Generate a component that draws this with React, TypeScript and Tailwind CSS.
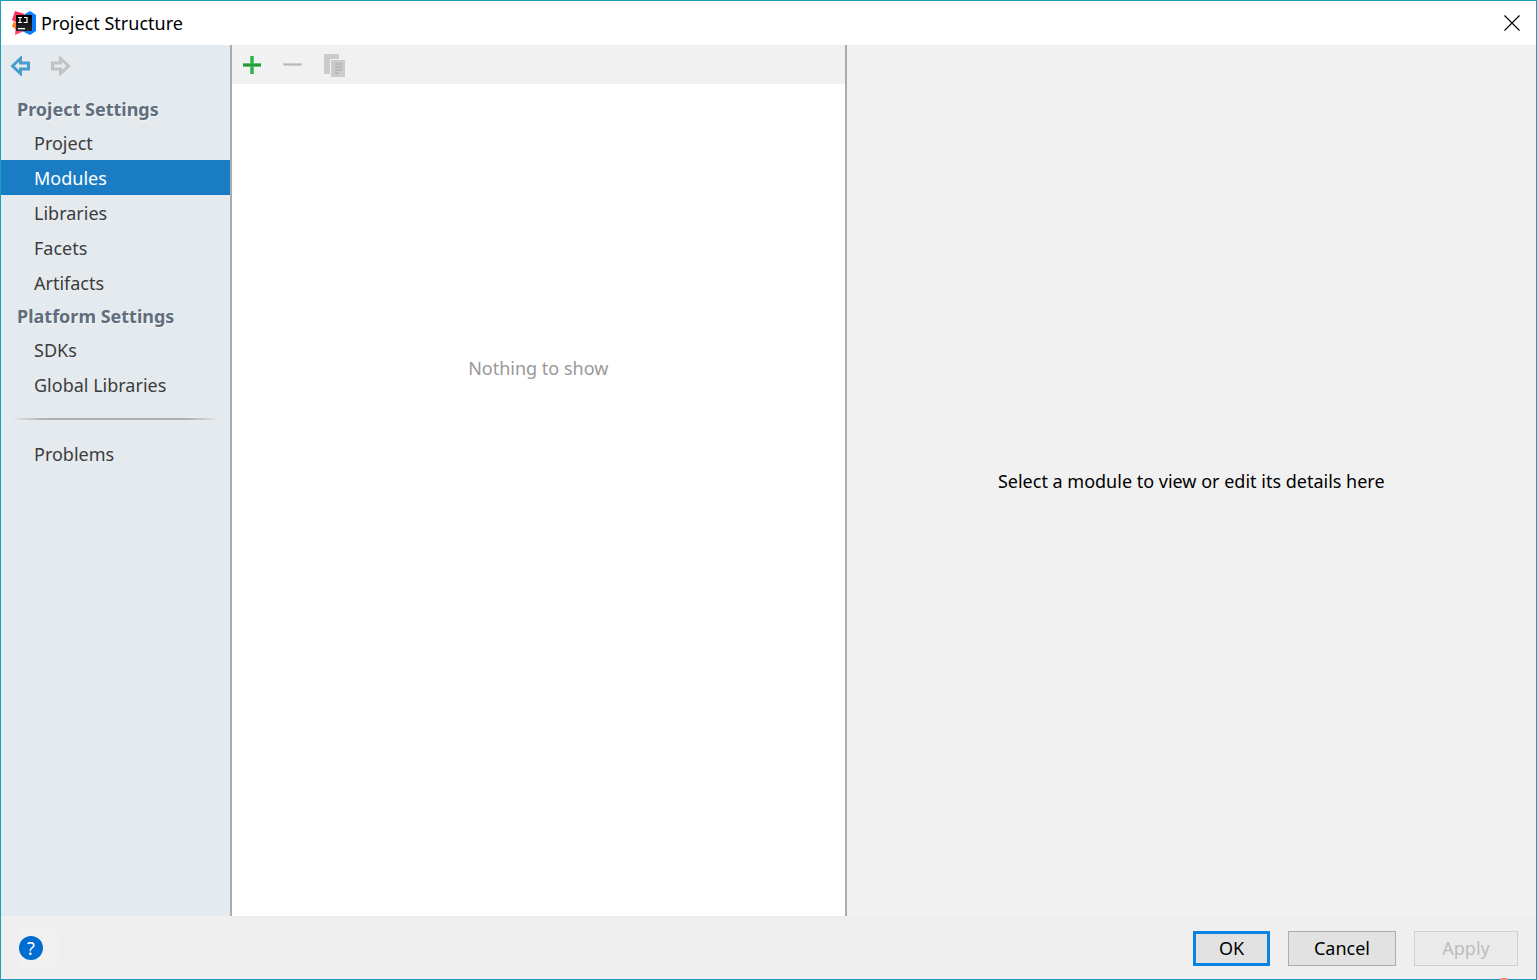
import { useState } from "react";

type Group = { title: string; items: string[] };

const groups: Group[] = [
  {
    title: "Project Settings",
    items: ["Project", "Modules", "Libraries", "Facets", "Artifacts"],
  },
  { title: "Platform Settings", items: ["SDKs", "Global Libraries"] },
];

function AppLogo() {
  return (
    <svg viewBox="0 0 24 24" className="h-6 w-6" aria-hidden="true">
      <defs>
        <linearGradient id="logo-box" x1="0" y1="0" x2="0" y2="1">
          <stop offset="0" stopColor="#000" />
          <stop offset="1" stopColor="#2a2a2a" />
        </linearGradient>
      </defs>
      <path d="M0 15.500 1.500 11 5 12v7L3.500 18z" fill="#fc801d" />
      <path d="M3 0 13 3 8 13 5 12 0 9z" fill="#fe315d" />
      <path d="M4 14 12 20 3 24z" fill="#fe4570" />
      <path d="M13 3 18 0 24 4V20L18 24 10 20z" fill="#087cfa" />
      <path d="M4 4h16v16H4z" fill="url(#logo-box)" />
      <path
        d="M6 6.500h4M8 6.500v5M6 11.500h4M12 6.500h3v5h-3.500"
        fill="none"
        stroke="#fff"
        strokeWidth="1.200"
      />
      <path d="M6 17h7v1.300H6z" fill="#fff" />
    </svg>
  );
}

function Arrow({ color, flip }: { color: string; flip?: boolean }) {
  return (
    <svg
      viewBox="0 0 20 20"
      className={`h-5 w-5 ${flip ? "-scale-x-100" : ""}`}
      aria-hidden="true"
    >
      <path
        d="M2.500 10 10.500 2.500V7H18.500V13H10.500V17.500z"
        fill="none"
        stroke={color}
        strokeWidth="3"
      />
    </svg>
  );
}

function CopyIcon() {
  return (
    <svg viewBox="0 0 22 24" className="h-6 w-[22px]" aria-hidden="true">
      <path d="M0 1h15v5H6v15H0z" fill="#cbcbcb" />
      <path d="M7 7h14v17H7z" fill="#cbcbcb" />
      <path d="M11 10h7v2h-7zM11 13h7v2h-7zM11 16h7v2h-7zM11 19h4v2h-4z" fill="#b9b9b9" />
    </svg>
  );
}

export default function App() {
  const [selected, setSelected] = useState("Modules");

  const row = (name: string) => (
    <button
      key={name}
      onClick={() => setSelected(name)}
      className={`flex h-[35px] w-full items-center pl-[33px] text-left ${
        name === selected ? "bg-[#1a7dc4] text-white" : "text-[#3c3c3c]"
      }`}
    >
      {name}
    </button>
  );

  return (
    <div className="relative flex min-h-screen flex-col border border-[#1a9fbc] bg-[#efefef] font-['Noto_Sans','Open_Sans',sans-serif] text-lg leading-6 text-black">
      <header className="flex h-11 shrink-0 items-center justify-between bg-white pl-[11px] pr-4">
        <div className="flex items-center gap-[5px]">
          <AppLogo />
          <h1>Project Structure</h1>
        </div>
        <button aria-label="Close">
          <svg viewBox="0 0 16 16" className="h-4 w-4" aria-hidden="true">
            <path d="M.5.5l15 15M15.500.5l-15 15" stroke="#000" strokeWidth="1.200" />
          </svg>
        </button>
      </header>

      <main className="flex flex-1">
        {/* sections */}
        <nav className="w-[231px] shrink-0 border-r-2 border-[#acacac] bg-[#e5eaee]">
          <div className="flex h-12 items-center gap-[21px] pb-1.5 pl-[9px]">
            <button aria-label="Back">
              <Arrow color="#4a9ccb" />
            </button>
            <button aria-label="Forward" disabled>
              <Arrow color="#c2c2c2" flip />
            </button>
          </div>
          {groups.map((g) => (
            <div key={g.title}>
              <h2 className="flex h-8 items-center pl-4 font-bold text-[#606e7d] [text-shadow:1px_1px_0_#f4f6f8]">
                {g.title}
              </h2>
              {g.items.map(row)}
            </div>
          ))}
          <div className="mx-2.5 my-4 h-0.5 bg-[linear-gradient(to_right,transparent,#b0b0b0_16%,#b0b0b0_84%,transparent)]" />
          {row("Problems")}
        </nav>

        {/* module list */}
        <section className="flex flex-[613] flex-col border-r-2 border-[#acacac] bg-white">
          <div className="flex h-[39px] items-center gap-[22px] bg-[#f1f1f1] pl-[11px]">
            <button aria-label="Add">
              <svg viewBox="0 0 18 18" className="h-[18px] w-[18px]" aria-hidden="true">
                <path d="M7 0h4v18h-4zM0 7h18v4H0z" fill="#5fc274" />
                <path d="M8 0h2v18h-2z" fill="#2fb04a" />
                <path d="M0 8h18v2H0z" fill="#249a3c" />
              </svg>
            </button>
            <button aria-label="Remove" disabled className="flex h-6 items-center">
              <svg viewBox="0 0 19 3" className="h-[3px] w-[19px]" aria-hidden="true">
                <path d="M0 0h19v3H0z" fill="#cecece" />
                <path d="M1 1h17v1H1z" fill="#b8b8b8" />
              </svg>
            </button>
            <button aria-label="Copy" disabled>
              <CopyIcon />
            </button>
          </div>
          <div className="flex flex-1 flex-col items-center pt-1 text-[#999]">
            <div className="flex-1" />
            <p>Nothing to show</p>
            <div className="flex-2" />
          </div>
        </section>

        {/* details */}
        <section className="flex flex-[690] items-center justify-center bg-[#f1f1f1]">
          <p>Select a module to view or edit its details here</p>
        </section>
      </main>

      <footer className="flex h-[63px] shrink-0 items-center justify-between px-[18px] pt-px">
        <div className="flex h-9 w-[39px] items-center bg-[#f1f1f1]">
          <button
            aria-label="Help"
            className="flex h-6 w-6 items-center justify-center rounded-full bg-[#006dd1] text-lg text-white"
          >
            ?
          </button>
        </div>
        <div className="flex gap-[18px]">
          <button className="h-[35px] w-[77px] border-3 border-[#0a84e0] bg-[#e2e2e2]">OK</button>
          <button className="h-[35px] w-[108px] border border-[#adadad] bg-[#e2e2e2]">
            Cancel
          </button>
          <button
            disabled
            className="h-[35px] w-[104px] border border-[#d0d0d0] bg-[#ebebeb] text-[#bdbdbd]"
          >
            Apply
          </button>
        </div>
      </footer>
      <span className="absolute -bottom-px right-7 h-0.5 w-2 rounded-t-full bg-[#f58a66]" />
    </div>
  );
}
